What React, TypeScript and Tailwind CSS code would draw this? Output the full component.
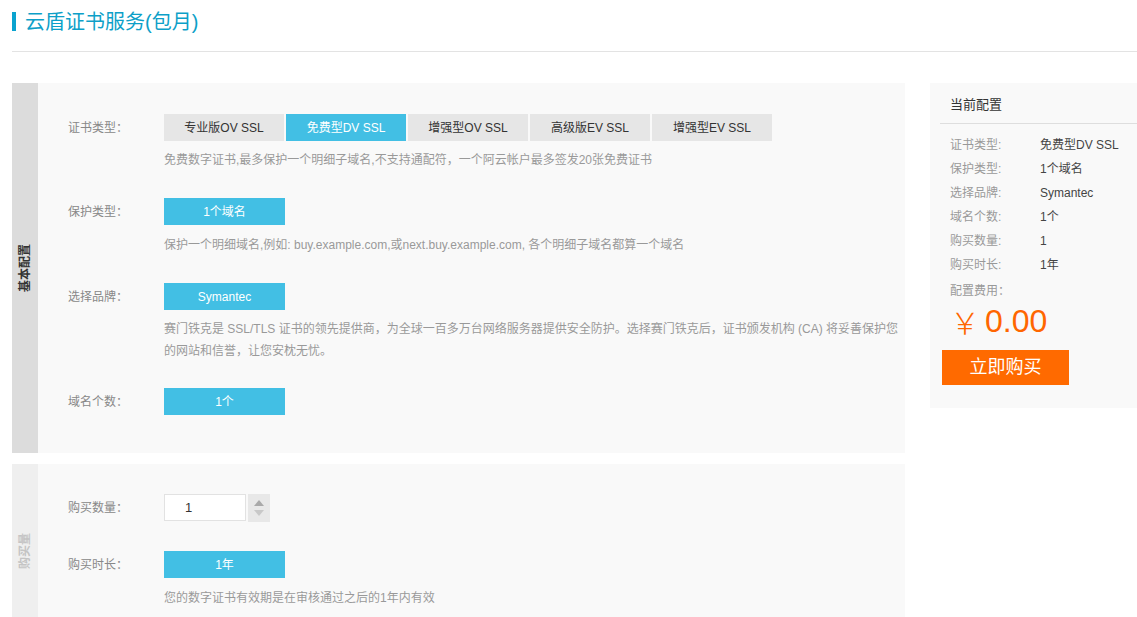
const FONT = { fontFamily: '"Liberation Sans", "Noto Sans CJK SC", sans-serif' };

const TYPES = ['专业版OV SSL', '免费型DV SSL', '增强型OV SSL', '高级版EV SSL', '增强型EV SSL'];

function Label({ children }: { children: string }) {
  return <div className="w-[96px] shrink-0 pt-px text-[12px] leading-[27px] text-[#888]">{children}</div>;
}

function Pick({ children }: { children: string }) {
  return (
    <div className="flex h-[27px] w-[121px] items-center justify-center bg-[#42bfe4] text-[12px] text-white">{children}</div>
  );
}

function Desc({ children }: { children: React.ReactNode }) {
  return <div className="text-[12px] leading-[18px] text-[#999]">{children}</div>;
}

function Side({ text, dark }: { text: string; dark?: boolean }) {
  return (
    <div className={`flex w-[26px] shrink-0 items-center justify-center ${dark ? 'bg-[#dcdcdc]' : 'bg-[#efefef]'}`}>
      <span
        className={`-rotate-90 whitespace-nowrap text-[12px] font-bold ${dark ? 'text-[#333]' : 'text-[#c4c4c4]'}`}
      >
        {text}
      </span>
    </div>
  );
}

function Row({ label, value }: { label: string; value: string }) {
  return (
    <div className="flex h-[24px] items-center text-[12px]">
      <span className="w-[90px] text-[#999]">{label}</span>
      <span className="text-[#444]">{value}</span>
    </div>
  );
}

export default function App() {
  return (
    <div className="min-h-screen bg-white" style={FONT}>
      <div className="ml-[12px] flex h-[52px] items-center border-b border-[#e3e3e3] pb-[8px]">
        <span className="h-[19px] w-[4px] bg-[#0aa3cf]" />
        <h1 className="ml-[9px] text-[20px] leading-none text-[#0d9fc8]">云盾证书服务(包月)</h1>
      </div>

      <div className="ml-[12px] mt-[31px] flex items-start gap-[25px]">
        <div className="flex w-[893px] shrink-0 flex-col gap-[11px]">
          <div className="flex bg-[#f9f9f9]">
            <Side text="基本配置" dark />
            <div className="flex flex-col pb-[37px] pl-[30px] pr-[8px] pt-[31px]">
              <div className="flex">
                <Label>证书类型：</Label>
                <div>
                  <div className="flex gap-[2px]">
                    {TYPES.map((t, i) => (
                      <div
                        key={t}
                        className={`flex h-[27px] w-[120px] items-center justify-center text-[12px] ${
                          i === 1 ? 'bg-[#42bfe4] text-white' : 'bg-[#e6e6e6] text-[#333]'
                        }`}
                      >
                        {t}
                      </div>
                    ))}
                  </div>
                  <div className="mt-[10px]">
                    <Desc>免费数字证书,最多保护一个明细子域名,不支持通配符，一个阿云帐户最多签发20张免费证书</Desc>
                  </div>
                </div>
              </div>

              <div className="mt-[29px] flex">
                <Label>保护类型：</Label>
                <div>
                  <Pick>1个域名</Pick>
                  <div className="mt-[11px]">
                    <Desc>保护一个明细域名,例如: buy.example.com,或next.buy.example.com, 各个明细子域名都算一个域名</Desc>
                  </div>
                </div>
              </div>

              <div className="mt-[29px] flex">
                <Label>选择品牌：</Label>
                <div>
                  <Pick>Symantec</Pick>
                  <div className="mt-[8px] w-[735px] text-[12px] leading-[22px] text-[#999]">
                    赛门铁克是 SSL/TLS 证书的领先提供商，为全球一百多万台网络服务器提供安全防护。选择赛门铁克后，证书颁发机构 (CA) 将妥善保护您的网站和信誉，让您安枕无忧。
                  </div>
                </div>
              </div>

              <div className="mt-[26px] flex">
                <Label>域名个数：</Label>
                <Pick>1个</Pick>
              </div>
            </div>
          </div>

          <div className="flex bg-[#f9f9f9]">
            <Side text="购买量" />
            <div className="flex flex-col pb-[31px] pl-[30px] pt-[30px]">
              <div className="flex">
                <Label>购买数量：</Label>
                <div className="flex gap-[2px]">
                  <div className="flex h-[27px] w-[82px] items-center border border-[#e2e2e2] bg-white pl-[20px] text-[13px] text-[#333]">
                    1
                  </div>
                  <div className="flex h-[28px] w-[22px] flex-col items-center justify-center gap-[4px] bg-[#e8e8e8]">
                    <span className="h-0 w-0 border-x-[5px] border-b-[6px] border-x-transparent border-b-[#a9a9a9]" />
                    <span className="h-0 w-0 border-x-[5px] border-t-[6px] border-x-transparent border-t-[#c8c8c8]" />
                  </div>
                </div>
              </div>
              <div className="mt-[29px] flex">
                <Label>购买时长：</Label>
                <div>
                  <Pick>1年</Pick>
                  <div className="mt-[11px]">
                    <Desc>您的数字证书有效期是在审核通过之后的1年内有效</Desc>
                  </div>
                </div>
              </div>
            </div>
          </div>
        </div>

        <div className="flex-1 bg-[#f9f9f9] pb-[23px]">
          <div className="ml-[10px] flex h-[41px] items-center border-b border-[#dedede] pl-[10px] pt-[3px] text-[13px] text-[#333]">
            当前配置
          </div>
          <div className="mt-[9px] pl-[20px]">
            <Row label="证书类型:" value="免费型DV SSL" />
            <Row label="保护类型:" value="1个域名" />
            <Row label="选择品牌:" value="Symantec" />
            <Row label="域名个数:" value="1个" />
            <Row label="购买数量:" value="1" />
            <Row label="购买时长:" value="1年" />
            <div className="mt-[2px] flex h-[24px] items-center text-[12px] text-[#999]">配置费用：</div>
            <div className="flex h-[36px] items-center text-[32px] font-light leading-none text-[#ff6600]">
              <span className="mr-[5px] font-['Noto_Sans_CJK_SC'] text-[30px] font-light">￥</span>
              <span>0.00</span>
            </div>
          </div>
          <div className="ml-[12px] mt-[11px] flex h-[35px] w-[127px] items-center justify-center bg-[#ff6a00] text-[18px] text-white">
            立即购买
          </div>
        </div>
      </div>
    </div>
  );
}
